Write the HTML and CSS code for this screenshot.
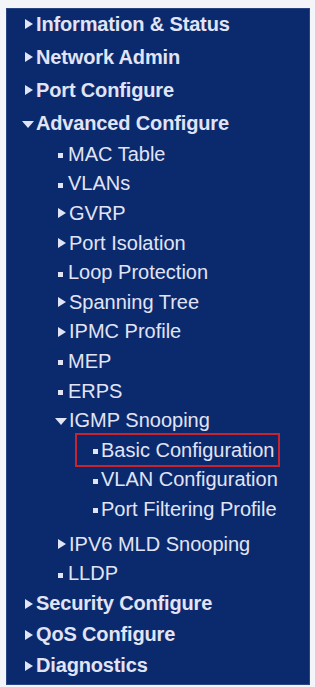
FILE: index.html
```html
<!DOCTYPE html>
<html lang="en">
<head>
    <meta charset="UTF-8">
    <meta name="viewport" content="width=device-width, initial-scale=1.0">
    <link rel="stylesheet" href="styles.css">
</head>
<body>
    <nav class="menu">
        <ul class="tree">
            <li class="node top"><span class="label">Information &amp; Status</span></li>
            <li class="node top"><span class="label">Network Admin</span></li>
            <li class="node top"><span class="label">Port Configure</span></li>
            <li class="node top open"><span class="label">Advanced Configure</span>
                <ul class="sub">
                    <li class="leaf"><span class="label">MAC Table</span></li>
                    <li class="leaf"><span class="label">VLANs</span></li>
                    <li class="node"><span class="label">GVRP</span></li>
                    <li class="node"><span class="label">Port Isolation</span></li>
                    <li class="leaf"><span class="label">Loop Protection</span></li>
                    <li class="node"><span class="label">Spanning Tree</span></li>
                    <li class="node"><span class="label">IPMC Profile</span></li>
                    <li class="leaf"><span class="label">MEP</span></li>
                    <li class="leaf"><span class="label">ERPS</span></li>
                    <li class="node open"><span class="label">IGMP Snooping</span>
                        <ul class="sub deep">
                            <li class="leaf current"><span class="label">Basic Configuration</span></li>
                            <li class="leaf"><span class="label">VLAN Configuration</span></li>
                            <li class="leaf"><span class="label">Port Filtering Profile</span></li>
                        </ul>
                    </li>
                    <li class="node gap"><span class="label">IPV6 MLD Snooping</span></li>
                    <li class="leaf"><span class="label">LLDP</span></li>
                </ul>
            </li>
            <li class="node top tail"><span class="label">Security Configure</span></li>
            <li class="node top tail"><span class="label">QoS Configure</span></li>
            <li class="node top tail"><span class="label">Diagnostics</span></li>
        </ul>
    </nav>
</body>
</html>
```

FILE: styles.css
```css
* {
    box-sizing: border-box;
    margin: 0;
    padding: 0;
}

body {
    background: #f4f5f8;
    font-family: 'Liberation Sans', Arial, sans-serif;
}

.menu {
    width: 304px;
    height: 677px;
    margin: 8px 0 0 6px;
    background: #0b2a6d;
    border: 1px solid #2a4584;
    color: #e1e4f6;
}

ul {
    list-style: none;
}

.tree {
    margin-top: -1.5px;
    padding-left: 18px;
}

.sub {
    padding-left: 33px;
}

.sub.deep {
    padding-left: 35px;
}

.label {
    display: flex;
    align-items: center;
    height: 29.6px;
    font-size: 20px;
    white-space: nowrap;
}

.top > .label {
    height: 33px;
    font-weight: bold;
    letter-spacing: -0.15px;
}

.top.tail > .label {
    height: 31px;
}

/* closed node: small right triangle */
.node > .label::before {
    content: '';
    width: 0;
    height: 0;
    margin-right: 3px;
    border-left: 8px solid #e1e4f6;
    border-top: 5.5px solid transparent;
    border-bottom: 5.5px solid transparent;
}

/* open node: down triangle */
.node.open > .label::before {
    margin-left: -3px;
    margin-right: 2px;
    margin-top: 2px;
    border-left: 6px solid transparent;
    border-right: 6px solid transparent;
    border-top: 7px solid #e1e4f6;
    border-bottom: 0;
}

/* leaf: square bullet */
.leaf > .label::before {
    content: '';
    width: 5px;
    height: 5px;
    margin-top: 3px;
    margin-right: 5px;
    background: #e1e4f6;
}

.deep .leaf > .label::before {
    margin-right: 3px;
}

.gap {
    margin-top: 5px;
}

.current > .label {
    width: fit-content;
    margin-left: -16px;
    padding: 0 4px 0 16px;
    outline: 2px solid #c8242e;
}
```
